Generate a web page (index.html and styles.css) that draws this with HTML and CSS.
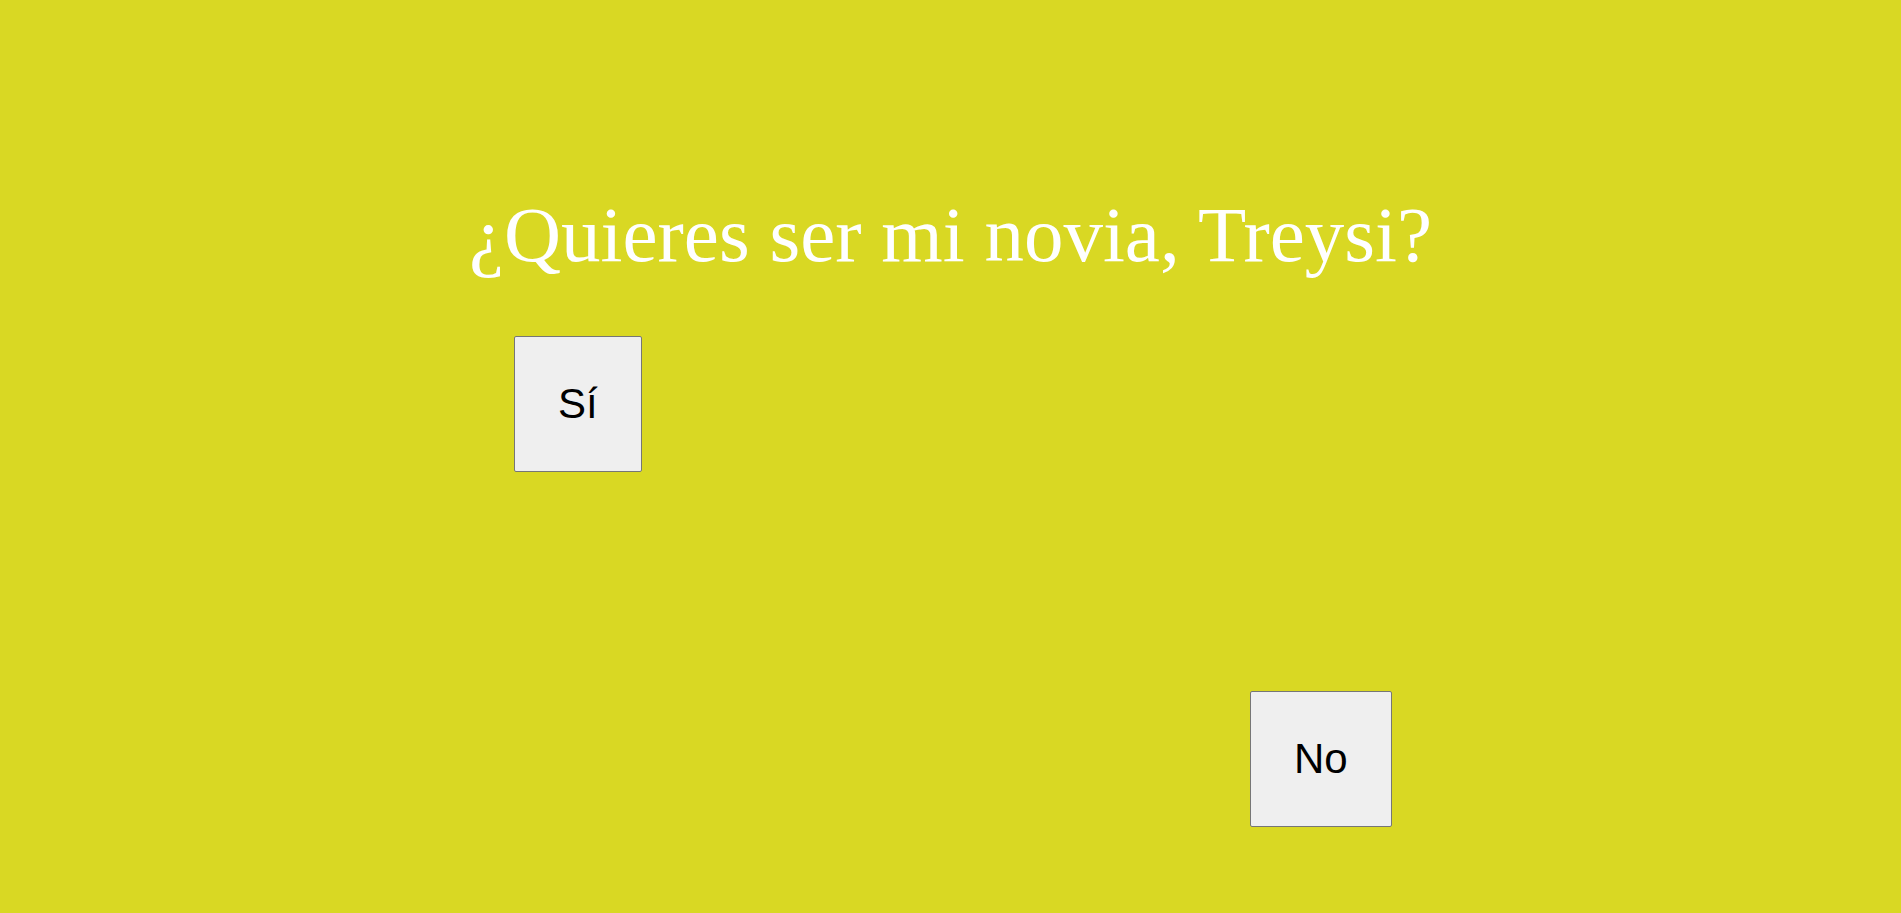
FILE: index.html
```html
<!DOCTYPE html>
<html lang="es">
<head>
<meta charset="utf-8">
<title>¿Quieres ser mi novia?</title>
<link rel="stylesheet" href="styles.css">
</head>
<body>
<main class="page">
  <h1 class="question">¿Quieres ser mi novia, Treysi?</h1>
  <div class="actions">
    <button class="btn btn-yes">Sí</button>
  </div>
  <button class="btn btn-no">No</button>
</main>
</body>
</html>
```

FILE: styles.css
```css
html, body {
  margin: 0;
  padding: 0;
  height: 100%;
}
body {
  background: #d9d823;
  overflow: hidden;
}
.page {
  position: relative;
  min-height: 100%;
  padding-top: 190px;
  box-sizing: border-box;
}
.question {
  margin: 0;
  height: 92px;
  font-family: "Liberation Serif", "Times New Roman", serif;
  font-size: 79px;
  font-weight: normal;
  color: #ffffff;
  text-align: center;
}
.actions {
  display: flex;
  margin-top: 54px;
  padding-left: 514px;
}
.btn {
  font-family: "Liberation Sans", Arial, sans-serif;
  font-size: 42px;
  color: #000;
  background: #efefef;
  border: 1px solid #767676;
  border-radius: 2px;
  padding: 43px;
  margin: 0;
  line-height: normal;
}
.btn-no {
  position: absolute;
  left: 1250px;
  top: 691px;
}
```
